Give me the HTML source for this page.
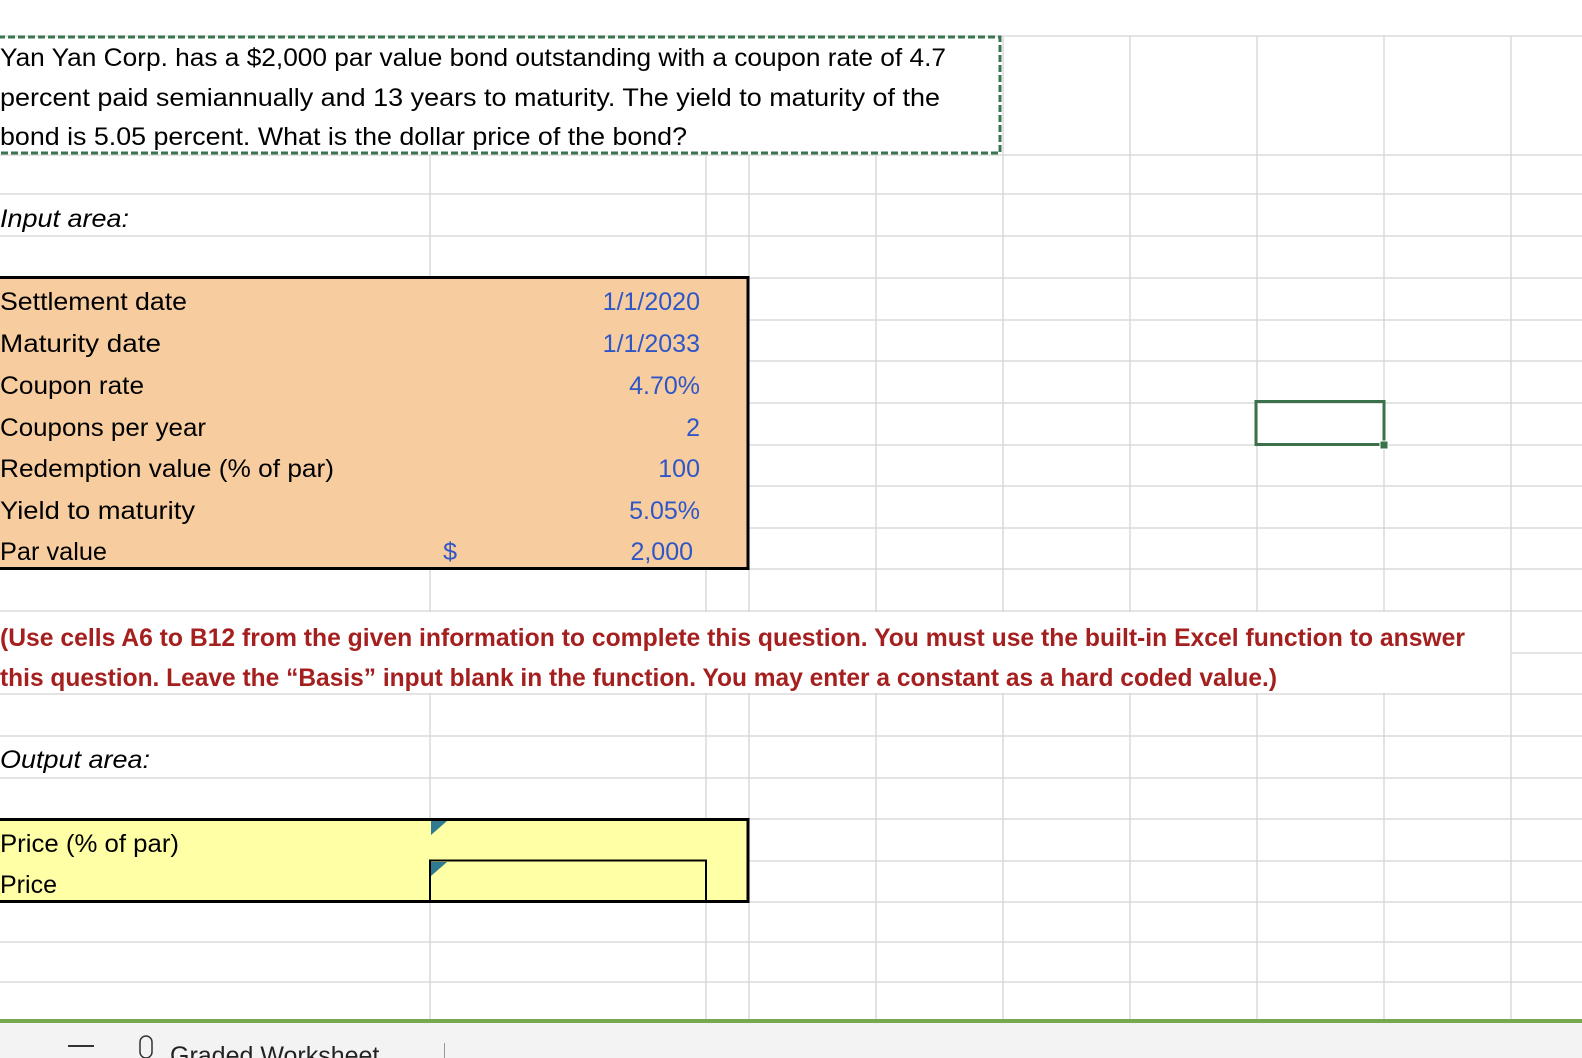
<!DOCTYPE html>
<html><head><meta charset="utf-8"><style>
html,body{margin:0;padding:0;background:#fff;width:1582px;height:1058px;overflow:hidden}
svg{display:block}
text{font-family:"Liberation Sans",sans-serif;font-size:25px}
</style></head><body>
<svg width="1582" height="1058" viewBox="0 0 1582 1058" xmlns="http://www.w3.org/2000/svg">
<rect width="1582" height="1058" fill="#fff"/>
<g stroke="#d4d4d4" stroke-width="1.3">
<line x1="0" x2="1582" y1="36" y2="36"/>
<line x1="0" x2="1582" y1="155" y2="155"/>
<line x1="0" x2="1582" y1="194" y2="194"/>
<line x1="0" x2="1582" y1="236" y2="236"/>
<line x1="0" x2="1582" y1="278" y2="278"/>
<line x1="0" x2="1582" y1="320" y2="320"/>
<line x1="0" x2="1582" y1="361" y2="361"/>
<line x1="0" x2="1582" y1="403" y2="403"/>
<line x1="0" x2="1582" y1="445" y2="445"/>
<line x1="0" x2="1582" y1="486" y2="486"/>
<line x1="0" x2="1582" y1="528" y2="528"/>
<line x1="0" x2="1582" y1="569" y2="569"/>
<line x1="0" x2="1582" y1="611" y2="611"/>
<line x1="1511" x2="1582" y1="653" y2="653"/>
<line x1="0" x2="1582" y1="694" y2="694"/>
<line x1="0" x2="1582" y1="736" y2="736"/>
<line x1="0" x2="1582" y1="778" y2="778"/>
<line x1="0" x2="1582" y1="819" y2="819"/>
<line x1="0" x2="1582" y1="861" y2="861"/>
<line x1="0" x2="1582" y1="902" y2="902"/>
<line x1="0" x2="1582" y1="942" y2="942"/>
<line x1="0" x2="1582" y1="982" y2="982"/>
<line x1="430" x2="430" y1="36" y2="1020"/>
<line x1="706" x2="706" y1="36" y2="1020"/>
<line x1="749" x2="749" y1="36" y2="1020"/>
<line x1="876" x2="876" y1="36" y2="1020"/>
<line x1="1003" x2="1003" y1="36" y2="1020"/>
<line x1="1130" x2="1130" y1="36" y2="1020"/>
<line x1="1257" x2="1257" y1="36" y2="1020"/>
<line x1="1384" x2="1384" y1="36" y2="1020"/>
<line x1="1511" x2="1511" y1="36" y2="1020"/>
</g>
<rect x="0" y="37" width="1002" height="117" fill="#fff"/>
<rect x="0" y="612" width="1510" height="81" fill="#fff"/>
<rect x="0" y="195" width="429" height="40" fill="#fff"/>
<rect x="0" y="737" width="429" height="40" fill="#fff"/>
<rect x="-2" y="37" width="1002" height="116" fill="none" stroke="#3a7550" stroke-width="3" stroke-dasharray="7 3"/>
<rect x="-3" y="277.5" width="751" height="291" fill="#f7cda0" stroke="#000" stroke-width="3"/>
<rect x="-3" y="819.5" width="751" height="82" fill="#ffffa5" stroke="#000" stroke-width="3"/>
<rect x="430" y="860.5" width="276" height="41" fill="none" stroke="#000" stroke-width="2"/>
<polygon points="431,821 447,821 431,835" fill="#2f7a91"/>
<polygon points="431,862 447,862 431,876" fill="#2f7a91"/>
<rect x="1256" y="401.5" width="128" height="43" fill="none" stroke="#3a714b" stroke-width="3"/>
<rect x="1380" y="441" width="8" height="8" fill="#3a714b" stroke="#fff" stroke-width="1"/>
<text x="0" y="66" textLength="946" lengthAdjust="spacingAndGlyphs">Yan Yan Corp. has a $2,000 par value bond outstanding with a coupon rate of 4.7</text>
<text x="0" y="106" textLength="940" lengthAdjust="spacingAndGlyphs">percent paid semiannually and 13 years to maturity. The yield to maturity of the</text>
<text x="0" y="145" textLength="687" lengthAdjust="spacingAndGlyphs">bond is 5.05 percent. What is the dollar price of the bond?</text>
<text x="0" y="227" font-style="italic" textLength="129" lengthAdjust="spacingAndGlyphs">Input area:</text>
<g>
<text x="0" y="310" textLength="187" lengthAdjust="spacingAndGlyphs">Settlement date</text>
<text x="0" y="352" textLength="161" lengthAdjust="spacingAndGlyphs">Maturity date</text>
<text x="0" y="394" textLength="144" lengthAdjust="spacingAndGlyphs">Coupon rate</text>
<text x="0" y="436" textLength="206" lengthAdjust="spacingAndGlyphs">Coupons per year</text>
<text x="0" y="477" textLength="334" lengthAdjust="spacingAndGlyphs">Redemption value (% of par)</text>
<text x="0" y="519" textLength="195" lengthAdjust="spacingAndGlyphs">Yield to maturity</text>
<text x="0" y="560" textLength="107" lengthAdjust="spacingAndGlyphs">Par value</text>
</g>
<g fill="#2f56c6" text-anchor="end" font-size="26">
<text x="700" y="310">1/1/2020</text>
<text x="700" y="352">1/1/2033</text>
<text x="700" y="394">4.70%</text>
<text x="700" y="436">2</text>
<text x="700" y="477">100</text>
<text x="700" y="519">5.05%</text>
<text x="693" y="560">2,000</text>
<text x="457" y="560">$</text>
</g>
<g fill="#a51f1f" font-weight="bold" font-size="24">
<text x="0" y="646" textLength="1465" lengthAdjust="spacingAndGlyphs">(Use cells A6 to B12 from the given information to complete this question. You must use the built-in Excel function to answer</text>
<text x="0" y="686" textLength="1277" lengthAdjust="spacingAndGlyphs">this question. Leave the “Basis” input blank in the function. You may enter a constant as a hard coded value.)</text>
</g>
<text x="0" y="768" font-style="italic" textLength="150" lengthAdjust="spacingAndGlyphs">Output area:</text>
<text x="0" y="852" textLength="179" lengthAdjust="spacingAndGlyphs">Price (% of par)</text>
<text x="0" y="893" textLength="57" lengthAdjust="spacingAndGlyphs">Price</text>
<rect x="0" y="1022" width="1582" height="36" fill="#f3f3f3"/>
<rect x="0" y="1019" width="1582" height="4" fill="#76a84f"/>
<rect x="68" y="1045" width="26" height="2" fill="#333"/>
<rect x="140" y="1036" width="12" height="22" rx="6" fill="none" stroke="#333" stroke-width="1.5"/>
<text x="170" y="1064" font-size="28" fill="#222">Graded Worksheet</text>
<rect x="444" y="1043" width="1" height="15" fill="#999"/>
</svg>
</body></html>
